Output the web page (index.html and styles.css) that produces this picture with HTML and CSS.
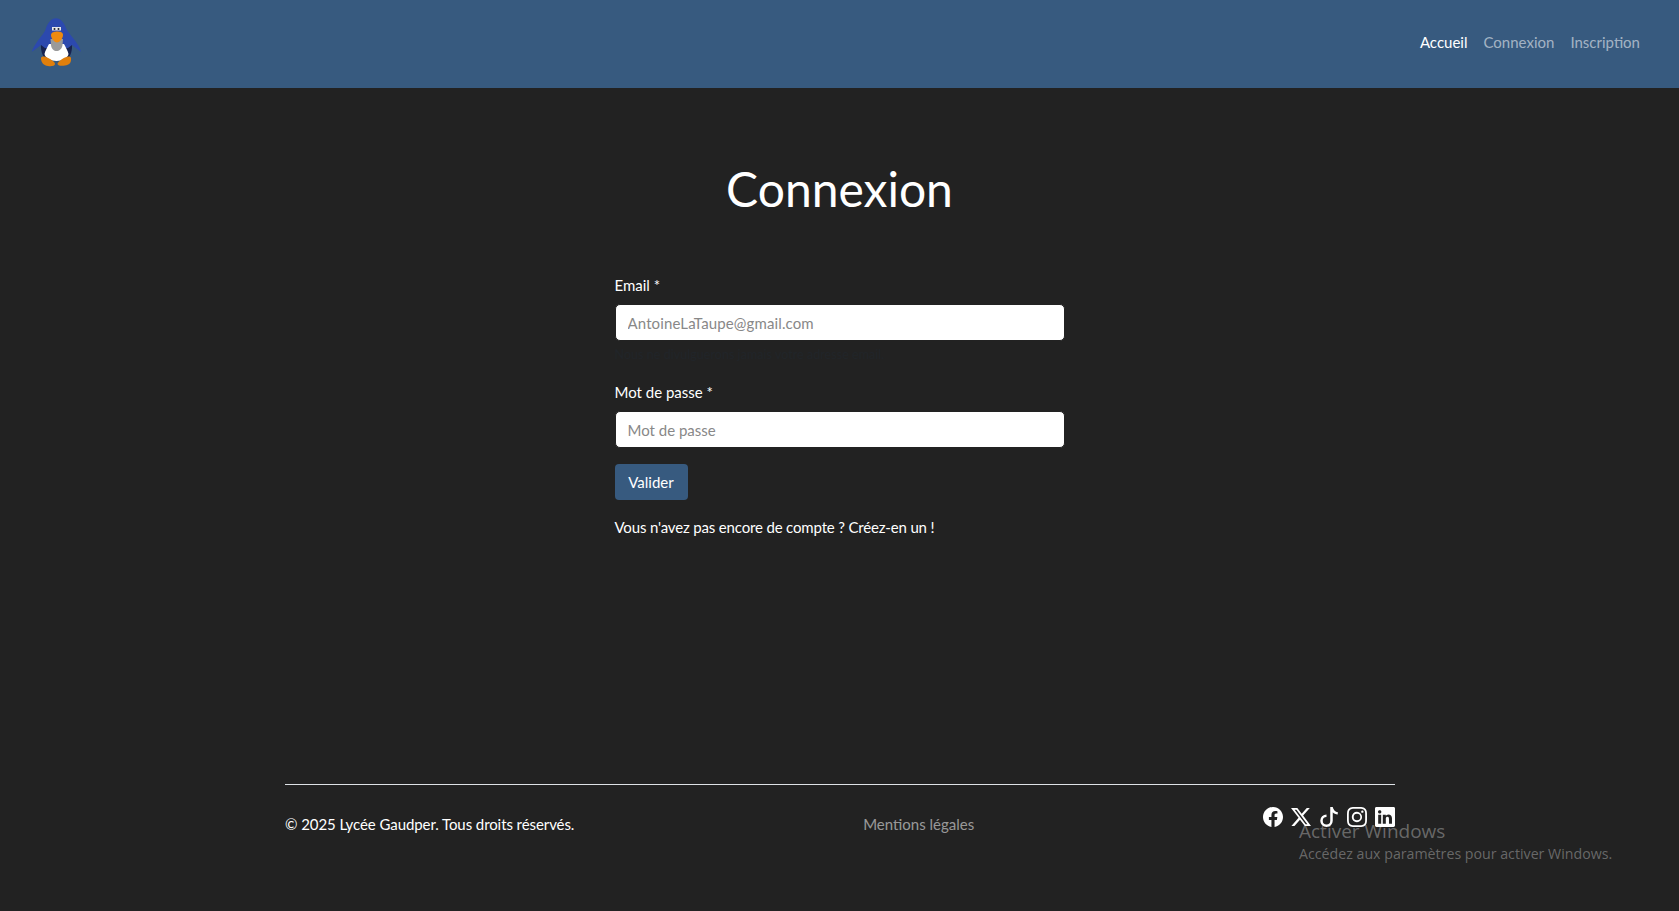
FILE: index.html
```html
<!DOCTYPE html>
<html lang="fr">
<head>
<meta charset="utf-8">
<title>Connexion</title>
<link rel="stylesheet" href="styles.css">
</head>
<body>
<header class="navbar">
  <a class="brand" href="#" aria-label="Accueil">
    <svg class="logo" viewBox="0 0 51 50" width="51" height="50">
      <path d="M10 26 C9.500 33 11 39 15 42 L36 42 C40 39 41.500 33 41 26 Z" fill="#16224f"/>
      <path d="M25 1.300 C30 1.300 33 6 35 11 C37 16 42 20 45 25 C47 28 49 31 50 34.700 C47 33 44 30 41 28 L37 31 L14 31 L10 28 C7 30 4 33 .7 34.700 C2 31 4 28 6 25 C9 20 14 16 15 11 C17 6 20 1.300 25 1.300 Z" fill="#2c49ae"/>
      <path d="M18 27 C16 31 14 34 13.500 37 C14 41 20 44 25.500 44 C31 44 37 41 37.500 37 C37 34 35 31 33 27 Z" fill="#fff"/>
      <path d="M19.500 22 L32 22 L31.500 28 C31 32 28 34 25.500 34 C23 34 20.500 32 20 28 Z" fill="#9a9a9a"/>
      <path d="M21 10 H30 V13.500 H21 Z" fill="#e8e8e8"/>
      <circle cx="23.500" cy="12" r="1" fill="#20202e"/><circle cx="27.500" cy="12" r="1" fill="#20202e"/>
      <path d="M20 18 C20 15 24 14.500 26 14.500 C29 14.500 32 15 32 18 C32 22 28 25.500 26 25.500 C24 25.500 20 22 20 18 Z" fill="#ee8a10"/>
      <path d="M10 41 C10.500 39 14 39 17 41 C20 42.500 24 44.500 24 47 C24 49 20 49.500 17 49 C13 48.500 10 46 10 41 Z" fill="#e07f0c"/>
      <path d="M40 41 C39.500 39 37 39 34 40.500 C31 42 27 44.500 26.500 47 C27 49 31 49 34 48.500 C38 48 40.500 46 40 41 Z" fill="#e07f0c"/>
    </svg>
  </a>
  <nav class="nav">
    <a class="nav-link active" href="#">Accueil</a>
    <a class="nav-link" href="#">Connexion</a>
    <a class="nav-link" href="#">Inscription</a>
  </nav>
</header>

<main class="main">
  <h1 class="title">Connexion</h1>
  <form class="form">
    <div class="field">
      <label class="label" for="email">Email *</label>
      <input class="input input-email" id="email" type="email" placeholder="AntoineLaTaupe@gmail.com">
      <small class="hint">Nous ne divulguerons jamais votre adresse email.</small>
    </div>
    <div class="field">
      <label class="label" for="pw">Mot de passe *</label>
      <input class="input" id="pw" type="password" placeholder="Mot de passe">
    </div>
    <button class="btn" type="button">Valider</button>
    <p class="alt"><a href="#">Vous n'avez pas encore de compte ? Créez-en un !</a></p>
  </form>
</main>

<footer class="footer">
  <div class="footer-row">
    <span class="copy">© 2025 Lycée Gaudper. Tous droits réservés.</span>
    <a class="legal" href="#">Mentions légales</a>
    <div class="social">
      <svg class="ico" viewBox="0 0 16 16"><path d="M16 8.049c0-4.446-3.582-8.05-8-8.05C3.58 0-.002 3.603-.002 8.05c0 4.017 2.926 7.347 6.75 7.951v-5.625h-2.03V8.05H6.75V6.275c0-2.017 1.195-3.131 3.022-3.131.876 0 1.791.157 1.791.157v1.98h-1.009c-.993 0-1.303.621-1.303 1.258v1.51h2.218l-.354 2.326H9.25V16c3.824-.604 6.75-3.934 6.75-7.951"/></svg>
      <svg class="ico" viewBox="0 0 16 16"><path d="M12.6.75h2.454l-5.36 6.142L16 15.25h-4.937l-3.867-5.07-4.425 5.07H.316l5.733-6.57L0 .75h5.063l3.495 4.633L12.601.75Zm-.86 13.028h1.36L4.323 2.145H2.865z"/></svg>
      <svg class="ico" viewBox="0 0 16 16"><path d="M9 0h1.98c.144.715.54 1.617 1.235 2.512C12.895 3.389 13.797 4 15 4v2c-1.753 0-3.07-.814-4-1.829V11a5 5 0 1 1-5-5v2a3 3 0 1 0 3 3z"/></svg>
      <svg class="ico" viewBox="0 0 16 16"><path d="M8 0C5.829 0 5.556.01 4.703.048 3.85.088 3.269.222 2.76.42a3.9 3.9 0 0 0-1.417.923A3.9 3.9 0 0 0 .42 2.76C.222 3.268.087 3.85.048 4.7.01 5.555 0 5.827 0 8.001c0 2.172.01 2.444.048 3.297.04.852.174 1.433.372 1.942.205.526.478.972.923 1.417.444.445.89.719 1.416.923.51.198 1.09.333 1.942.372C5.555 15.99 5.827 16 8 16s2.444-.01 3.298-.048c.851-.04 1.434-.174 1.943-.372a3.9 3.9 0 0 0 1.416-.923c.445-.445.718-.891.923-1.417.197-.509.332-1.09.372-1.942C15.99 10.445 16 10.173 16 8s-.01-2.445-.048-3.299c-.04-.851-.175-1.433-.372-1.941a3.9 3.9 0 0 0-.923-1.417A3.9 3.9 0 0 0 13.24.42c-.51-.198-1.092-.333-1.943-.372C10.443.01 10.172 0 7.998 0zm-.717 1.442h.718c2.136 0 2.389.007 3.232.046.78.035 1.204.166 1.486.275.373.145.64.319.92.599s.453.546.598.92c.11.281.24.705.275 1.485.039.843.047 1.096.047 3.231s-.008 2.389-.047 3.232c-.035.78-.166 1.203-.275 1.485a2.5 2.5 0 0 1-.599.919c-.28.28-.546.453-.92.598-.28.11-.704.24-1.485.276-.843.038-1.096.047-3.232.047s-2.39-.009-3.233-.047c-.78-.036-1.203-.166-1.485-.276a2.5 2.5 0 0 1-.92-.598 2.5 2.5 0 0 1-.6-.92c-.109-.281-.24-.705-.275-1.485-.038-.843-.046-1.096-.046-3.233s.008-2.388.046-3.231c.036-.78.166-1.204.276-1.486.145-.373.319-.64.599-.92s.546-.453.92-.598c.282-.11.705-.24 1.485-.276.738-.034 1.024-.044 2.515-.045zm4.988 1.328a.96.96 0 1 0 0 1.92.96.96 0 0 0 0-1.92m-4.27 1.122a4.109 4.109 0 1 0 0 8.217 4.109 4.109 0 0 0 0-8.217m0 1.441a2.667 2.667 0 1 1 0 5.334 2.667 2.667 0 0 1 0-5.334"/></svg>
      <svg class="ico" viewBox="0 0 16 16"><path d="M0 1.146C0 .513.526 0 1.175 0h13.65C15.474 0 16 .513 16 1.146v13.708c0 .633-.526 1.146-1.175 1.146H1.175C.526 16 0 15.487 0 14.854zm4.943 12.248V6.169H2.542v7.225zm-1.2-8.212c.837 0 1.358-.554 1.358-1.248-.015-.709-.52-1.248-1.342-1.248S2.4 3.226 2.4 3.934c0 .694.521 1.248 1.327 1.248zm4.908 8.212V9.359c0-.216.016-.432.08-.586.173-.431.568-.878 1.232-.878.869 0 1.216.662 1.216 1.634v3.865h2.401V9.25c0-2.22-1.184-3.252-2.764-3.252-1.274 0-1.845.7-2.165 1.193v.025h-.016l.016-.025V6.169h-2.4c.03.678 0 7.225 0 7.225z"/></svg>
    </div>
  </div>
</footer>

<aside class="watermark">
  <div class="wm-title">Activer Windows</div>
  <div class="wm-sub">Accédez aux paramètres pour activer Windows.</div>
</aside>
</body>
</html>
```
FILE: styles.css
```css
* { box-sizing: border-box; }
html, body { height: 100%; }
body {
  margin: 0;
  min-height: 911px;
  background: #222;
  color: #fff;
  font-family: Lato, "Liberation Sans", sans-serif;
  font-size: 15px;
  line-height: 1.5;
  display: flex;
  flex-direction: column;
  overflow: hidden;
}
a { text-decoration: none; color: inherit; }
.navbar {
  height: 88px;
  background: #375a7f;
  padding: 0 30px 0 31px;
  display: flex;
  align-items: center;
  justify-content: space-between;
  flex: none;
}
.brand { display: block; height: 50px; margin-top: -4px; }
.logo { display: block; filter: blur(.3px); }
.nav { display: flex; margin-top: -4px; margin-right: 1px; }
.nav-link { padding: 8px; color: rgba(255,255,255,.55); }
.nav-link.active { color: #fff; }
.main { flex: 1; display: flex; flex-direction: column; align-items: center; }
.title {
  margin: 72px 0 0;
  font-size: 48px;
  font-weight: 400;
  line-height: 1.2;
}
.form { width: 450px; margin-top: 56px; }
.field { margin-bottom: 16px; }
.label { display: block; margin-bottom: 8px; }
.input {
  display: block;
  width: 100%;
  height: 37px;
  padding: 6px 12px;
  border: 1px solid #222;
  border-radius: 5px;
  background: #fff;
  font: inherit;
  color: #222;
}
.input::placeholder { color: #888; opacity: 1; }
.input-email::placeholder { letter-spacing: .13px; }
.hint { display: block; margin-top: 5px; font-size: 12.6px; color: #212529; height: 18.5px; }
.btn {
  display: block;
  height: 36px;
  margin-top: 16px;
  width: 73px;
  padding: 0;
  border: 0;
  border-radius: 4px;
  background: #375a7f;
  color: #fff;
  font: inherit;
}
.alt { margin: 16px 0 0; letter-spacing: -.16px; }
.footer { flex: none; padding: 0 284px 54px 285px; }
.footer-row {
  border-top: 1px solid #dee2e6;
  height: 73px;
  display: flex;
  justify-content: space-between;
  align-items: center;
  padding-top: 7px;
}
.copy { flex: none; letter-spacing: -.08px; }
.legal { color: rgba(255,255,255,.55); }
.social { display: flex; gap: 8px; align-self: flex-start; margin-top: 15px; }
.ico { width: 20px; height: 20px; fill: #fff; display: block; }
.watermark {
  position: absolute;
  left: 1299px;
  top: 818px;
  color: rgba(255,255,255,.33);
  font-family: "Open Sans", "Noto Sans", sans-serif;
}
.wm-title { font-size: 19px; line-height: 27px; }
.wm-sub { font-size: 14.2px; line-height: 18px; }
```
